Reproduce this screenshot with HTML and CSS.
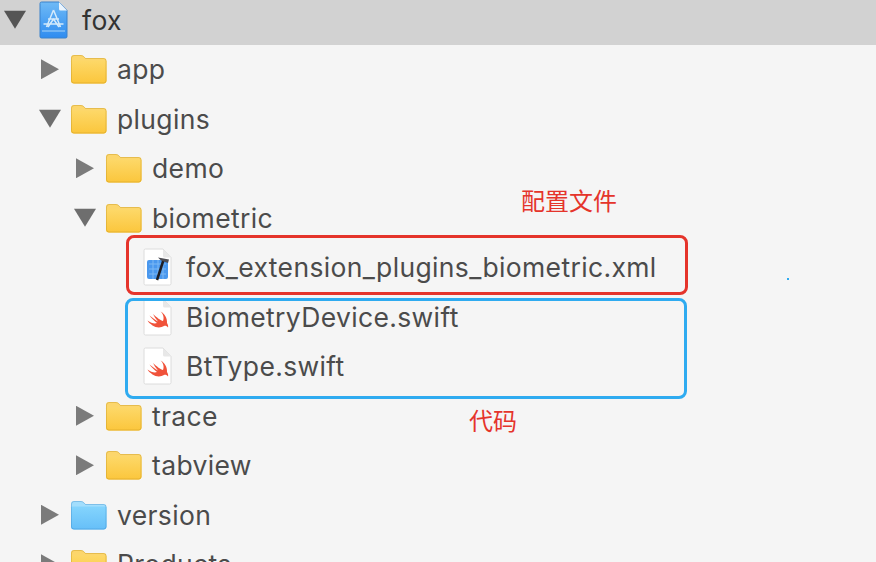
FILE: index.html
```html
<!DOCTYPE html>
<html>
<head>
    <meta charset="UTF-8">
    <title>fox</title>
    <link rel="stylesheet" href="styles.css">
</head>
<body>
    <svg class="defs" width="0" height="0">
        <defs>
            <linearGradient id="yellow-front" x1="0" y1="0" x2="0" y2="1">
                <stop offset="0" stop-color="#fdd868"/>
                <stop offset="1" stop-color="#fbc63c"/>
            </linearGradient>
            <linearGradient id="blue-front" x1="0" y1="0" x2="0" y2="1">
                <stop offset="0" stop-color="#84d4fd"/>
                <stop offset="1" stop-color="#66bff8"/>
            </linearGradient>
            <linearGradient id="project-fill" x1="0" y1="0" x2="0" y2="1">
                <stop offset="0" stop-color="#6fbaf6"/>
                <stop offset="1" stop-color="#2f8cf0"/>
            </linearGradient>
            <symbol id="folder" viewBox="0 0 37 30">
                <path d="M1 4Q1 1 4 1H11Q13 1 14.500 3L15.500 4H33.500Q36.500 4 36.500 7V26.500Q36.500 29.500 33.500 29.500H4Q1 29.500 1 26.500Z" fill="var(--folder-back)"/>
                <path d="M1 7.500Q1 6.500 2.500 6.500H35Q36.500 6.500 36.500 7.500V26.500Q36.500 29.500 33.500 29.500H4Q1 29.500 1 26.500Z" fill="var(--folder-front)"/>
                <path d="M1.500 4Q1.500 1.500 4 1.500H11Q13 1.500 14.500 3.500L15.500 4.500H33.500Q36 4.500 36 7V26.500Q36 29 33.500 29H4Q1.500 29 1.500 26.500Z" fill="none" stroke="var(--folder-edge)"/>
            </symbol>
            <symbol id="page" viewBox="0 0 29 38">
                <path d="M1 2.500Q1 1 2.500 1H20L28 9.500V35.500Q28 37 26.500 37H2.500Q1 37 1 35.500Z" fill="#fff" stroke="#dcdcdc"/>
                <path d="M20 1V8Q20 9.500 21.500 9.500H28Z" fill="#e8e8e8"/>
            </symbol>
            <symbol id="swift" viewBox="0 0 29 38">
                <use href="#page"/>
                <path d="M4.500 22.500C8 25 11.500 26 14 25C10.500 22.500 8 19.500 6.500 17.500C9.500 20 13 22.500 15 23.500C12.500 20.500 11 18 10 16C13.500 19.500 18 22.500 20 23C21.500 19.500 20 15.500 17.500 13.500C21.500 15.500 24.500 20 24 25C25 26.500 25.500 28.500 25 29.500C24 28 22.500 27.500 21 28C18 30 13 30 9.500 27.500C7.500 26 5.500 24.500 4.500 22.500Z" fill="#f0523a"/>
            </symbol>
        </defs>
    </svg>

    <div class="tree">
        <div class="row row-selected level-0">
            <span class="arrow arrow-down arrow-dark"></span>
            <span class="icon">
                <svg width="29" height="38" viewBox="0 0 29 38">
                    <path d="M1 2.500Q1 1 2.500 1H20L28 9.500V35.500Q28 37 26.500 37H2.500Q1 37 1 35.500Z" fill="url(#project-fill)" stroke="#3a82cc"/>
                    <path d="M20 1V8Q20 9.500 21.500 9.500H28Z" fill="#eaf4fd"/>
                    <path d="M14.500 9L7.500 26M14.500 9L21.500 26M4.500 23H24.500M9 18H20M9 26L14.500 18L20 26" fill="none" stroke="#d4eafb" stroke-width="1.500"/>
                    <path d="M3 30H26" stroke="#a8d4f8" stroke-width="1"/>
                </svg>
            </span>
            <span class="name name-dark">fox</span>
        </div>
        <div class="row level-1">
            <span class="arrow"></span>
            <span class="icon"><svg class="folder" width="37" height="30"><use href="#folder"/></svg></span>
            <span class="name">app</span>
        </div>
        <div class="row level-1">
            <span class="arrow arrow-down"></span>
            <span class="icon"><svg class="folder" width="37" height="30"><use href="#folder"/></svg></span>
            <span class="name">plugins</span>
        </div>
        <div class="row level-2">
            <span class="arrow"></span>
            <span class="icon"><svg class="folder" width="37" height="30"><use href="#folder"/></svg></span>
            <span class="name">demo</span>
        </div>
        <div class="row level-2">
            <span class="arrow arrow-down"></span>
            <span class="icon"><svg class="folder" width="37" height="30"><use href="#folder"/></svg></span>
            <span class="name">biometric</span>
        </div>
        <div class="row level-3">
            <span class="arrow arrow-none"></span>
            <span class="icon">
                <svg width="29" height="38" viewBox="0 0 29 38">
                    <use href="#page"/>
                    <rect x="4" y="12" width="21" height="19" rx="2" fill="#4a98ee"/>
                    <path d="M6 16H23M6 21H23M6 26H23M10 12V31M15 12V31M20 12V31" stroke="#7db8f4" stroke-width="1"/>
                    <path d="M14 32L20.500 12" stroke="#1e1e24" stroke-width="2.500"/>
                    <path d="M15 9.500L26 11.500L25 15L18 12.500Z" fill="#4c4c52"/>
                </svg>
            </span>
            <span class="name">fox_extension_plugins_biometric.xml</span>
        </div>
        <div class="row level-3">
            <span class="arrow arrow-none"></span>
            <span class="icon"><svg width="29" height="38"><use href="#swift"/></svg></span>
            <span class="name">BiometryDevice.swift</span>
        </div>
        <div class="row level-3">
            <span class="arrow arrow-none"></span>
            <span class="icon"><svg width="29" height="38"><use href="#swift"/></svg></span>
            <span class="name">BtType.swift</span>
        </div>
        <div class="row level-2">
            <span class="arrow"></span>
            <span class="icon"><svg class="folder" width="37" height="30"><use href="#folder"/></svg></span>
            <span class="name">trace</span>
        </div>
        <div class="row level-2">
            <span class="arrow"></span>
            <span class="icon"><svg class="folder" width="37" height="30"><use href="#folder"/></svg></span>
            <span class="name">tabview</span>
        </div>
        <div class="row level-1">
            <span class="arrow"></span>
            <span class="icon"><svg class="folder folder-blue" width="37" height="30"><use href="#folder"/></svg></span>
            <span class="name">version</span>
        </div>
        <div class="row level-1">
            <span class="arrow"></span>
            <span class="icon"><svg class="folder" width="37" height="30"><use href="#folder"/></svg></span>
            <span class="name">Products</span>
        </div>
    </div>

    <!-- annotations drawn over the screenshot -->
    <div class="mark mark-red"></div>
    <div class="mark mark-blue"></div>
    <div class="note note-config">配置文件</div>
    <div class="note note-code">代码</div>
    <div class="speck"></div>
</body>
</html>
```

FILE: styles.css
```css
html, body {
    height: 100%;
}
body {
    margin: 0;
    overflow: hidden;
    position: relative;
    background-color: #f5f5f5;
    font-family: Inter, "Noto Sans", sans-serif;
}
.defs {
    display: block;
    height: 0;
}
.tree {
    margin-top: -5px;
}
.row {
    display: flex;
    align-items: center;
    height: 49.5px;
}
.row-selected {
    background-color: #d2d2d2;
}
.level-0 {
    padding-left: 4px;
}
.level-1 {
    padding-left: 39px;
}
.level-2 {
    padding-left: 74px;
}
.level-3 {
    padding-left: 108px;
}
.arrow {
    width: 22px;
    height: 20px;
    margin-right: 9px;
    flex: none;
    background-color: #7b7b7b;
    clip-path: polygon(2px 0, 20px 10px, 2px 20px);
}
.arrow-down {
    background-color: #6e6e6e;
    clip-path: polygon(0 1px, 22px 1px, 11px 19px);
}
.arrow-dark {
    background-color: #555;
}
.arrow-none {
    background: none;
}
.icon {
    width: 37px;
    margin-right: 10px;
    flex: none;
    display: flex;
    justify-content: center;
}
.icon svg {
    display: block;
}
.folder {
    --folder-back: #fcd66c;
    --folder-front: url(#yellow-front);
    --folder-edge: rgba(190, 140, 20, .35);
}
.folder-blue {
    --folder-back: #a2defd;
    --folder-front: url(#blue-front);
    --folder-edge: rgba(40, 120, 190, .3);
}
.name {
    font-size: 26.5px;
    letter-spacing: .35px;
    line-height: 32px;
    color: #4b4b4b;
    white-space: nowrap;
}
.name-dark {
    color: #333;
}

.mark {
    position: absolute;
    box-sizing: border-box;
    border-radius: 8px;
    border: 3px solid;
}
.mark-red {
    left: 126px;
    top: 235px;
    width: 562px;
    height: 60px;
    border-color: #e5342b;
}
.mark-blue {
    left: 125px;
    top: 298px;
    width: 562px;
    height: 101px;
    border-color: #2fabf0;
}
.note {
    position: absolute;
    font-family: "Noto Sans CJK SC", sans-serif;
    font-size: 24px;
    line-height: 30px;
    color: #e5342b;
}
.note-config {
    left: 521px;
    top: 185px;
}
.note-code {
    left: 469px;
    top: 405px;
}
.speck {
    position: absolute;
    left: 787px;
    top: 278px;
    width: 2px;
    height: 2px;
    background-color: #2fabf0;
}
```
